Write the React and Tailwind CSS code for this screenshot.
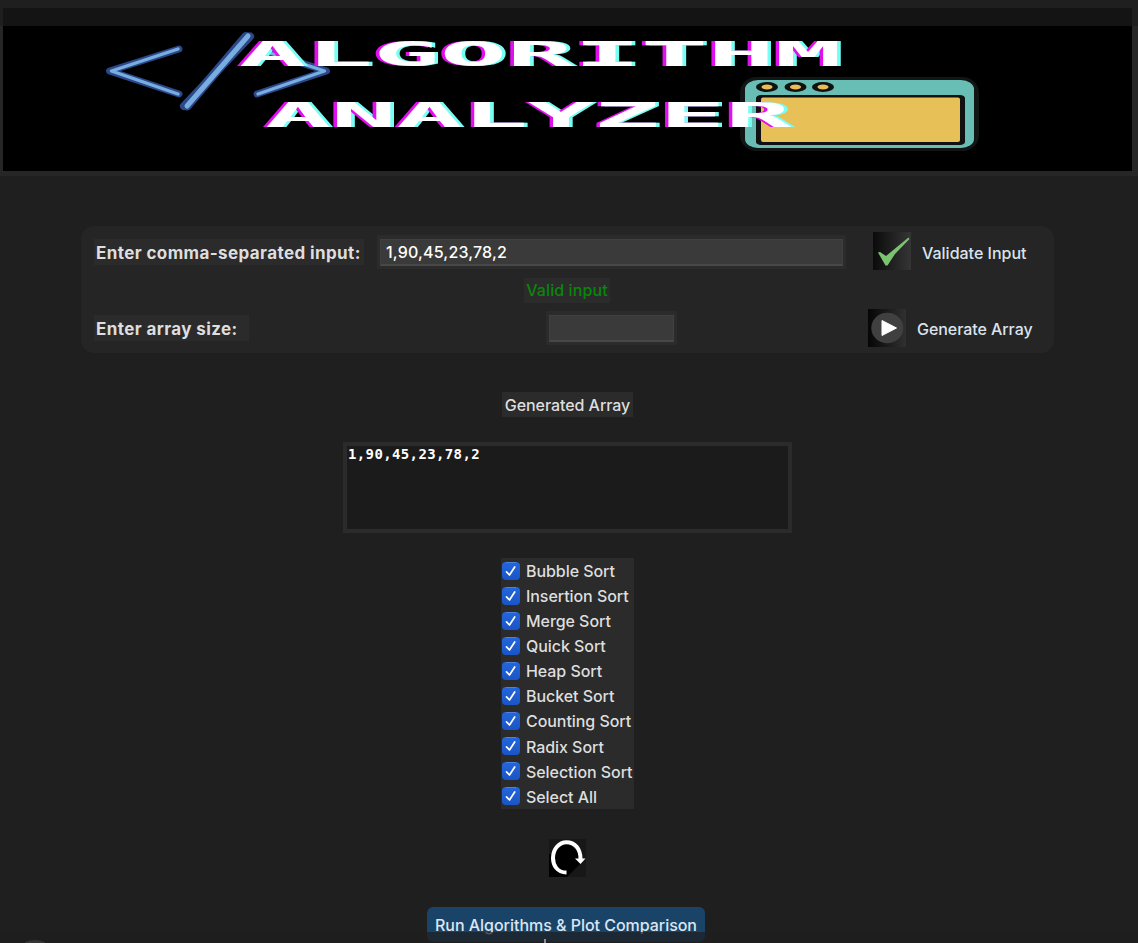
import React from "react";

const sorts = [
  "Bubble Sort",
  "Insertion Sort",
  "Merge Sort",
  "Quick Sort",
  "Heap Sort",
  "Bucket Sort",
  "Counting Sort",
  "Radix Sort",
  "Selection Sort",
  "Select All",
];

function BannerArt() {
  return (
    <svg className="block h-[145px] w-[1129px]" viewBox="3 26 1129 145">
      <g fill="none" strokeLinecap="round" strokeLinejoin="round">
        <g stroke="#2c478a">
          <path d="M179 49L109.500 71L179 94M257 94L326.500 71L257 49" strokeWidth="7" />
          <path d="M246 36.500L187 106" strokeWidth="9" />
          <path d="M250 36.500L184 106" strokeWidth="8" />
        </g>
        <g stroke="#78addf">
          <path d="M178 49L111.500 71L178 94M258 94L324.500 71L258 49" strokeWidth="3.4" />
          <path d="M248 36L187 106" strokeWidth="5" />
        </g>
      </g>
      <rect x="740" y="77" width="239" height="74" rx="16" fill="#111514" />
      <rect x="745" y="80" width="229" height="68" rx="13" ry="9" fill="#68beb5" />
      <rect x="756" y="95" width="209" height="50" rx="5" ry="3" fill="#111" />
      <rect x="761" y="97.500" width="199" height="44.500" rx="2" fill="#e7c157" />
      {[767, 795.500, 823].map((x) => (
        <g key={x}>
          <ellipse cx={x} cy="87" rx="11" ry="5" fill="#111" />
          <ellipse cx={x} cy="87" rx="5.500" ry="2.500" fill="#e7bd55" />
        </g>
      ))}
    </svg>
  );
}

function Banner() {
  return (
    <header className="h-[176px] bg-[#262626]">
      <div className="h-[8px] bg-[#1f1f1f]" />
      <div className="flex h-[18px] bg-[#1f1f1f] pl-[3px]">
        <div className="w-[1129px] bg-[#141414]" />
      </div>
      <div className="relative ml-[3px] h-[145px] w-[1129px] bg-black">
        <BannerArt />
        <h1 className="font-['DejaVu_Sans_Mono',monospace] text-[33px] leading-[32px] font-bold text-white [text-shadow:-1.100px_0_#e010ee,1.100px_0_#76fff5]">
          <span className="absolute top-[13px] left-[236px] origin-left scale-x-[3.380]">ALGORITHM</span>
          <span className="absolute top-[74px] left-[262px] origin-left scale-x-[3.320]">ANALYZER</span>
        </h1>
      </div>
    </header>
  );
}

function Label({ children, className }) {
  return (
    <div className={"flex h-[26px] items-center bg-[#2b2b2b] pl-[2px] text-[17px] font-bold tracking-[0.4px] whitespace-nowrap text-[#dedede] " + className}>
      {children}
    </div>
  );
}

function Field({ value, className }) {
  return (
    <div className={"h-[34px] bg-[#2b2b2b] px-[3px] pt-[4px] " + className}>
      <div className="flex h-[27px] items-center border border-b-2 border-[#404040] border-b-[#484848] bg-[#3a3a3a] pl-[5px] text-[16px] font-[450] tracking-[0.170px] text-white">
        {value}
      </div>
    </div>
  );
}

function CheckImage() {
  return (
    <svg className="block size-[38px]" viewBox="0 0 38 38">
      <defs>
        <linearGradient id="checkShade">
          <stop offset="0" stopColor="#0b0b0b" />
          <stop offset="1" stopColor="#353535" />
        </linearGradient>
      </defs>
      <path fill="url(#checkShade)" d="M0 0h38v38H0z" />
      <path fill="#7bc370" d="M5 20.500L7 20L13 24L35.500 5.500L36.500 7L22 22L14.500 33.500L12.500 33.500Z" />
    </svg>
  );
}

function PlayImage() {
  return (
    <svg className="block size-[38px]" viewBox="0 0 38 38">
      <defs>
        <linearGradient id="playShade">
          <stop offset="0" stopColor="#060606" />
          <stop offset="1" stopColor="#303030" />
        </linearGradient>
      </defs>
      <path fill="url(#playShade)" d="M0 0h38v38H0z" />
      <ellipse cx="19.300" cy="19" rx="16" ry="15.200" fill="#404040" />
      <path d="M14 11.500L28.500 19L14 26.500Z" fill="#fff" stroke="#fff" strokeWidth="1" strokeLinejoin="round" />
    </svg>
  );
}

function ResetImage() {
  return (
    <svg className="block h-[38px] w-[37px]" viewBox="0 0 37 38">
      <path fill="#171717" d="M0 0h37v38H0z" />
      <path fill="#000" d="M3 15L17 3L32 15L32 24L18 38H0V15Z" />
      <path d="M17.500 33.500C8 33.500 4 26 4 19C4 10 10 3.200 17.500 3.200C26 3.200 31.500 10 31.500 20" fill="none" stroke="#fff" strokeWidth="4" />
      <path d="M26 19.500L36.500 19.500L31.500 25Z" fill="#fff" />
    </svg>
  );
}

function Checkbox() {
  return (
    <svg className="block size-[18px]" viewBox="0 0 18 18">
      <defs>
        <linearGradient id="boxFill" x1="0" y1="0" x2="0" y2="1">
          <stop offset="0" stopColor="#2366dc" />
          <stop offset="1" stopColor="#1a55c6" />
        </linearGradient>
      </defs>
      <rect width="18" height="18" rx="4" fill="url(#boxFill)" />
      <path d="M4 .5H14" stroke="#4c82df" />
      <path d="M4.500 9.800L7.500 13L12.700 5" fill="none" stroke="#fff" strokeWidth="1.700" strokeLinecap="round" strokeLinejoin="round" />
    </svg>
  );
}

export default function App() {
  return (
    <div className="relative h-[943px] w-[1138px] overflow-hidden bg-[#1f1f1f] font-['Inter',sans-serif] text-[16px] font-[450] tracking-[-0.060px] text-[#dedede]">
      <Banner />
      <section className="mt-[50px] ml-[81px] h-[127px] w-[973px] rounded-[13px] bg-[#252525] pt-[6px] pl-[13px] whitespace-nowrap">
        <div className="flex h-[38px] items-center">
          <Label className="mt-[2px] mr-[13px] w-[270px] pt-[4px]">Enter comma-separated input:</Label>
          <Field value="1,90,45,23,78,2" className="mt-[2px] mr-[27px] w-[469px]" />
          <CheckImage />
          <button className="ml-[11px] pt-[3px] tracking-normal text-[#dce2ec]">Validate Input</button>
        </div>
        <div className="mt-[8px] ml-[430px] flex h-[25px] w-[86px] items-center justify-center bg-[#2b2b2b] pb-[2px] tracking-[0.1px] text-[#0c850c]">Valid input</div>
        <div className="mt-[6px] flex h-[38px] items-center">
          <Label className="mr-[297px] w-[155px] pt-[4px]">Enter array size:</Label>
          <Field className="mr-[191px] w-[131px]" />
          <PlayImage />
          <button className="ml-[11px] pt-px text-[#dce2ec]">Generate Array</button>
        </div>
      </section>
      <h2 className="mt-[39px] ml-[502px] flex h-[25px] w-[131px] items-center justify-center bg-[#2b2b2b] font-[450] whitespace-nowrap">Generated Array</h2>
      <div className="mt-[25px] ml-[343px] h-[91px] w-[449px] border-4 border-[#2b2b2b] bg-[#1b1b1b] pl-px font-['DejaVu_Sans_Mono',monospace] text-[14px] leading-[17px] font-bold tracking-[0.370px] text-white">
        1,90,45,23,78,2
      </div>
      <ul className="mt-[25px] ml-[501px] flex h-[251px] w-[133px] flex-col bg-[#2b2b2b]">
        {sorts.map((name) => (
          <li key={name} className="flex h-[25.100px] items-center gap-[6px] pl-px whitespace-nowrap">
            <Checkbox />
            <span className="pt-[0.600px]">{name}</span>
          </li>
        ))}
      </ul>
      <div className="mt-[30px] ml-[549px]">
        <ResetImage />
      </div>
      <button className="mt-[30px] ml-[427px] flex h-[35px] w-[278px] items-center justify-center rounded-[6px] bg-[#194468] whitespace-nowrap tracking-[-0.030px] text-[#dce6f2]">
        Run Algorithms &amp; Plot Comparison
      </button>
      <div className="absolute bottom-0 left-0 h-[11px] w-full overflow-hidden bg-[#1e1e1e]/70">
        <svg className="block h-[11px] w-full" viewBox="0 0 1138 11">
          <ellipse cx="35" cy="14" rx="12" ry="6" fill="#363636" />
          <path d="M545 7V11" stroke="#8c8c8c" strokeWidth="2" />
        </svg>
      </div>
    </div>
  );
}
